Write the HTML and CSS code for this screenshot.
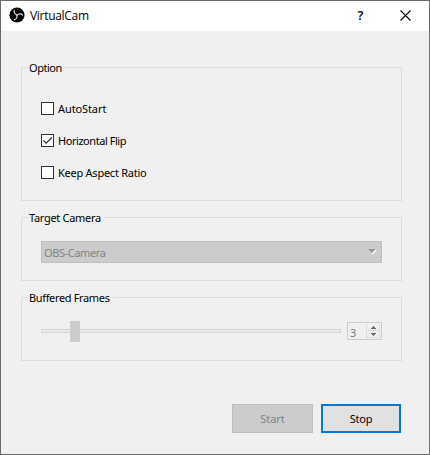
FILE: index.html
```html
<!DOCTYPE html>
<html lang="en">
<head>
    <meta charset="UTF-8">
    <meta name="viewport" content="width=device-width, initial-scale=1.0">
    <title>VirtualCam</title>
    <link rel="stylesheet" href="styles.css">
</head>
<body>
    <div class="window">
        <header class="titlebar">
            <svg class="logo" width="16" height="16" viewBox="0 0 16 16">
                <circle cx="8" cy="8" r="7.6" fill="#000"/>
                <g fill="none" stroke="#d8d8d8" stroke-width="1.2" stroke-linecap="round">
                    <path d="M8 7.8C6 7.300 4.600 5.400 5.300 3.300"/>
                    <path d="M8 7.800C6 7.300 4.600 5.400 5.300 3.300" transform="rotate(120 8 8)"/>
                    <path d="M8 7.800C6 7.300 4.600 5.400 5.300 3.300" transform="rotate(240 8 8)"/>
                </g>
            </svg>
            <span class="title">VirtualCam</span>
            <button class="title-btn help" type="button">?</button>
            <button class="title-btn close" type="button" aria-label="Close">
                <svg width="11" height="11" viewBox="0 0 11 11">
                    <path d="M0.500 0.500L10.500 10.500M10.500 0.500L0.500 10.500" stroke="#000" stroke-width="1.100"/>
                </svg>
            </button>
        </header>

        <form class="content">
            <fieldset class="group options">
                <legend class="option-legend">Option</legend>
                <label class="check"><span class="box"></span><span class="auto">AutoStart</span></label>
                <label class="check">
                    <span class="box">
                        <svg width="11" height="11" viewBox="0 0 11 11">
                            <path d="M1.300 5.300L4.200 8.200L9.900 2.500" fill="none" stroke="#333" stroke-width="1.200"/>
                        </svg>
                    </span>
                    <span class="flip">Horizontal Flip</span>
                </label>
                <label class="check"><span class="box"></span><span class="ratio">Keep Aspect Ratio</span></label>
            </fieldset>

            <fieldset class="group camera">
                <legend class="camera-legend">Target Camera</legend>
                <div class="combo">
                    <span>OBS-Camera</span>
                    <svg width="9" height="6" viewBox="0 0 9 6">
                        <path d="M8 1L4 5" stroke="#fff" stroke-width="1.500"/>
                        <path d="M0 0H7.500L4 4Z" fill="#989898"/>
                    </svg>
                </div>
            </fieldset>

            <fieldset class="group frames">
                <legend class="frames-legend">Buffered Frames</legend>
                <div class="slider">
                    <div class="groove"></div>
                    <div class="handle"></div>
                </div>
                <div class="spin">
                    <span class="value">3</span>
                    <span class="arrows">
                        <span class="arrow">
                            <svg width="5" height="3" viewBox="0 0 5 3"><path d="M2 0H3V1H4V2H5V3H0V2H1V1H2Z" fill="#6d6d6d"/></svg>
                        </span>
                        <span class="arrow">
                            <svg width="5" height="3" viewBox="0 0 5 3"><path d="M0 0H5V1H4V2H3V3H2V2H1V1H0Z" fill="#6d6d6d"/></svg>
                        </span>
                    </span>
                </div>
            </fieldset>

            <div class="buttons">
                <button class="btn start" type="button" disabled>Start</button>
                <button class="btn stop" type="button">Stop</button>
            </div>
        </form>
    </div>
</body>
</html>
```

FILE: styles.css
```css
* {
    box-sizing: border-box;
}

body {
    margin: 0;
    font-family: "Noto Sans", "Open Sans", sans-serif;
    font-size: 11px;
    color: #000;
}

.window {
    display: flex;
    flex-direction: column;
    width: 430px;
    height: 455px;
    border: 1px solid #6b6b6b;
    background: #f0f0f0;
}

svg {
    display: block;
}

/* title bar */
.titlebar {
    display: flex;
    align-items: center;
    height: 30px;
    padding: 0 1px 2px 8px;
    background: #fff;
}

.title {
    flex: 1;
    margin-left: 5px;
    font-family: "Open Sans", "Noto Sans", sans-serif;
    font-size: 12px;
    letter-spacing: -0.3px;
}

.title-btn {
    display: flex;
    align-items: center;
    justify-content: center;
    width: 45px;
    height: 28px;
    padding: 0;
    border: 0;
    background: none;
}

.help {
    font-family: "Open Sans", sans-serif;
    font-size: 13px;
    font-weight: 600;
}

/* groups */
.content {
    display: flex;
    flex-direction: column;
    flex: 1;
    padding: 29px 27px 0 20px;
}

.group {
    width: 381px;
    margin: 0 0 9px;
    padding: 0 19px;
    border: 1px solid #dcdcdc;
}

legend {
    height: 15px;
    margin-left: -13px;
    padding: 0 3px 0 1px;
    line-height: 15px;
    white-space: nowrap;
}

.option-legend {
    letter-spacing: -0.45px;
}

.camera-legend {
    letter-spacing: -0.3px;
}

.frames-legend {
    letter-spacing: -0.35px;
}

.options {
    height: 141px;
}

.camera,
.frames {
    height: 71px;
}

.check {
    display: flex;
    align-items: center;
    height: 32px;
    gap: 4px;
}

.options legend + .check {
    margin-top: 17px;
}

.box {
    width: 13px;
    height: 13px;
    border: 1px solid #333;
    background: #fff;
}

.auto {
    letter-spacing: -0.1px;
}

.flip {
    letter-spacing: -0.45px;
}

.ratio {
    letter-spacing: -0.25px;
}

.combo {
    display: flex;
    align-items: center;
    justify-content: space-between;
    width: 341px;
    height: 22px;
    margin-top: 16px;
    padding: 0 4px 0 2px;
    border: 1px solid #bfbfbf;
    background: #ccc;
    color: #838383;
    letter-spacing: -0.4px;
}

/* slider and spin box */
.frames {
    display: flex;
    align-items: center;
    padding-top: 15px;
    padding-bottom: 17px;
}

.slider {
    display: grid;
    align-items: center;
    width: 300px;
    height: 22px;
}

.groove,
.handle {
    grid-area: 1 / 1;
}

.groove {
    height: 4px;
    border: 1px solid #d6d6d6;
    background: #e7eaea;
}

.handle {
    width: 10px;
    height: 21px;
    margin-left: 29px;
    background: #ccc;
}

.spin {
    display: flex;
    justify-content: space-between;
    width: 35px;
    height: 18px;
    margin-left: 6px;
    padding: 1px;
    border: 1px solid #ccc;
    color: #7a7a7a;
}

.value {
    padding-left: 1px;
    line-height: 17px;
}

.arrows {
    display: flex;
    flex-direction: column;
    width: 14px;
    border: 1px solid #dcdcdc;
    border-top: 0;
}

.arrow {
    display: flex;
    flex: 1;
    align-items: center;
    justify-content: center;
}

.arrow + .arrow {
    border-top: 1px solid #dcdcdc;
}

/* buttons */
.buttons {
    display: flex;
    justify-content: flex-end;
    gap: 8px;
    margin: 34px 1px 0 0;
}

.btn {
    width: 81px;
    height: 29px;
    padding: 0;
    border: 1px solid #bfbfbf;
    background: #ccc;
    color: #838383;
    font: inherit;
}

.stop {
    width: 80px;
    border: 2px solid #0078d7;
    background: #e1e1e1;
    color: #000;
    letter-spacing: -0.2px;
}
```
